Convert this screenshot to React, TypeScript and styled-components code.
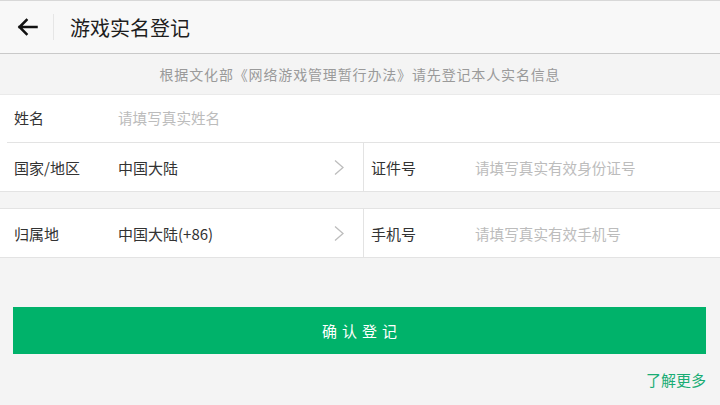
import React from "react";
import styled, { createGlobalStyle } from "styled-components";

const Global = createGlobalStyle`
  html, body { margin: 0; padding: 0; background: #f4f4f4; }
  body { font-family: "Noto Sans CJK SC", "Noto Sans", sans-serif; width: 720px; height: 405px; overflow: hidden; }
  * { box-sizing: border-box; }
`;

const Page = styled.div`
  width: 720px;
  height: 405px;
  display: flex;
  flex-direction: column;
  background: #f4f4f4;
`;

const Header = styled.div`
  height: 54px;
  display: flex;
  align-items: center;
  background: #f8f8f8;
  border-top: 1px solid #d8d8d8;
  border-bottom: 1px solid #c9c9c9;
`;

const BackBtn = styled.div`
  width: 54px;
  height: 26px;
  display: flex;
  align-items: center;
  justify-content: center;
  border-right: 1px solid #e6e6e6;
`;

const Title = styled.div`
  margin-left: 16px;
  font-size: 20px;
  color: #1e1e1e;
`;

const Notice = styled.div`
  height: 41px;
  display: flex;
  align-items: center;
  justify-content: center;
  font-size: 14px;
  letter-spacing: 0.85px;
  color: #9a9a9a;
  border-bottom: 1px solid #eaeaea;
`;

const Group = styled.div<{ $mt?: number }>`
  background: #fff;
  margin-top: ${(p) => p.$mt ?? 0}px;
  border-top: ${(p) => (p.$mt ? "1px solid #e3e3e3" : "none")};
  border-bottom: 1px solid #e3e3e3;
`;

const Row = styled.div<{ $divider?: boolean }>`
  height: 48px;
  display: flex;
  position: relative;
  ${(p) =>
    p.$divider
      ? `&::after { content: ""; position: absolute; left: 7px; right: 0; bottom: 0; height: 1px; background: #e3e3e3; }`
      : ""}
`;

const Half = styled.div<{ $left?: boolean }>`
  flex: ${(p) => (p.$left ? "0 0 364px" : "1")};
  display: flex;
  align-items: center;
  border-right: ${(p) => (p.$left ? "1px solid #e3e3e3" : "none")};
  padding-left: ${(p) => (p.$left ? 14 : 7)}px;
  height: 100%;
`;

const Full = styled.div<{ $up?: number }>`
  flex: 1;
  display: flex;
  align-items: center;
  padding-left: 14px;
  padding-bottom: ${(p) => p.$up ?? 0}px;
`;

const Label = styled.div`
  width: 104px;
  font-size: 15px;
  color: #333;
  flex-shrink: 0;
`;

const Value = styled.div`
  flex: 1;
  font-size: 15px;
  color: #333;
`;

const Placeholder = styled.div`
  flex: 1;
  font-size: 14.6px;
  color: #bcbcbc;
`;

const Chevron = styled.div`
  width: 12px;
  margin-right: 18px;
  display: flex;
  align-items: center;
`;

const ButtonWrap = styled.div`
  padding: 49px 14px 0 13px;
`;

const Confirm = styled.div`
  height: 47px;
  background: #00b26a;
  color: #fff;
  font-size: 15px;
  letter-spacing: 5px;
  display: flex;
  align-items: center;
  justify-content: center;
  padding-left: 5px;
`;

const More = styled.div`
  display: flex;
  justify-content: flex-end;
  padding: 15px 14px 0 0;
  font-size: 15px;
  color: #1aad74;
`;

const Arrow = () => (
  <svg width="22" height="20" viewBox="0 0 22 20">
    <path d="M20.5 10 H3.5 M10.5 3 L3.5 10 L10.5 17" fill="none" stroke="#111" strokeWidth="2.5" strokeLinecap="square" />
  </svg>
);

const ChevronIcon = () => (
  <svg width="12" height="17" viewBox="0 0 12 17">
    <path d="M2 1.5 L10 8.5 L2 15.5" fill="none" stroke="#bdbdbd" strokeWidth="1.3" />
  </svg>
);

export default function App() {
  return (
    <Page>
      <Global />
      <Header>
        <BackBtn>
          <Arrow />
        </BackBtn>
        <Title>游戏实名登记</Title>
      </Header>
      <Notice>根据文化部《网络游戏管理暂行办法》请先登记本人实名信息</Notice>
      <Group>
        <Row $divider>
          <Full $up={4}>
            <Label>姓名</Label>
            <Placeholder>请填写真实姓名</Placeholder>
          </Full>
        </Row>
        <Row>
          <Half $left>
            <Label>国家/地区</Label>
            <Value>中国大陆</Value>
            <Chevron>
              <ChevronIcon />
            </Chevron>
          </Half>
          <Half>
            <Label>证件号</Label>
            <Placeholder>请填写真实有效身份证号</Placeholder>
          </Half>
        </Row>
      </Group>
      <Group $mt={16}>
        <Row>
          <Half $left>
            <Label>归属地</Label>
            <Value>中国大陆(+86)</Value>
            <Chevron>
              <ChevronIcon />
            </Chevron>
          </Half>
          <Half>
            <Label>手机号</Label>
            <Placeholder>请填写真实有效手机号</Placeholder>
          </Half>
        </Row>
      </Group>
      <ButtonWrap>
        <Confirm>确认登记</Confirm>
      </ButtonWrap>
      <More>了解更多</More>
    </Page>
  );
}
